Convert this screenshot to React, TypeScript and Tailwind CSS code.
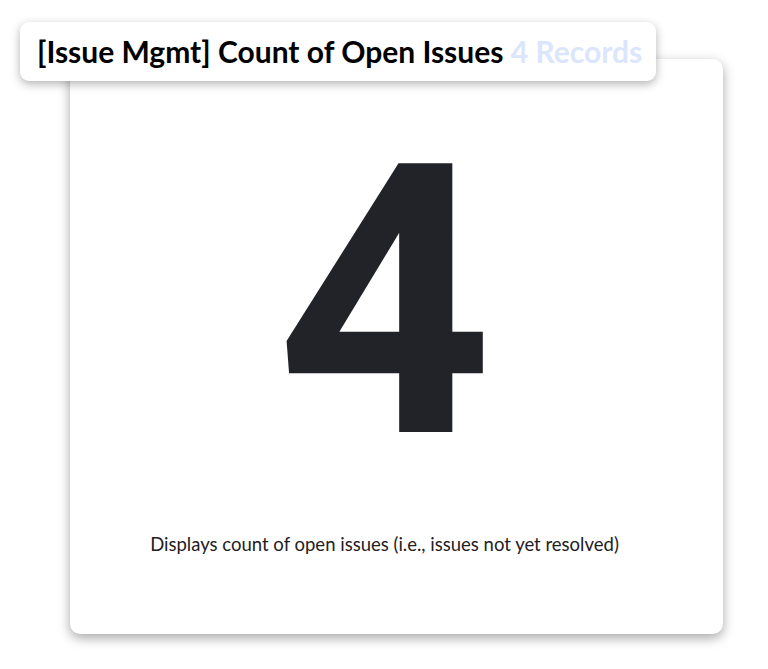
export default function App() {
  return (
    <div className="relative h-[669px] w-[768px] overflow-hidden bg-white">
      {/* card */}
      <div className="ml-[70px] mt-[59px] flex h-[575px] w-[653px] flex-col items-center rounded-[10px] bg-white pr-[24px] shadow-[0_4px_12px_rgba(0,0,0,0.35)]">
        <div
          className="mt-[55px] h-[330px] text-[378px] font-bold leading-none text-[#212329]"
          style={{ fontFamily: "Roboto, sans-serif" }}
        >
          4
        </div>
        <p
          className="mt-[87px] text-[18.5px] text-[#1f2023]"
          style={{ fontFamily: "Lato, sans-serif" }}
        >
          Displays count of open issues (i.e., issues not yet resolved)
        </p>
      </div>

      {/* title pill over the card */}
      <div
        className="absolute left-[20px] top-[22px] flex h-[59px] items-center rounded-[9px] bg-white pl-[17px] pr-[14px] shadow-[0_3px_10px_rgba(0,0,0,0.3)]"
        style={{ fontFamily: "Lato, sans-serif" }}
      >
        <span className="whitespace-nowrap text-[30px] font-bold text-black">
          [Issue Mgmt] Count of Open Issues{" "}
          <span className="text-[#dbe5fd]">4 Records</span>
        </span>
      </div>
    </div>
  );
}
